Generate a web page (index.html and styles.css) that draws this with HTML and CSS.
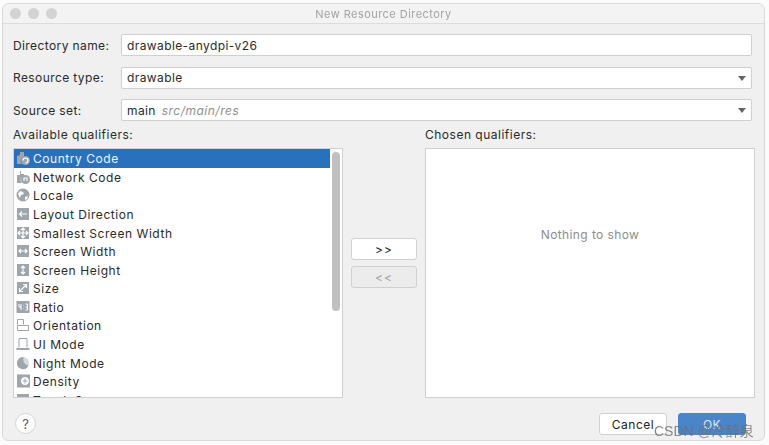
FILE: index.html
```html
<!DOCTYPE html>
<html lang="en">
<head>
<meta charset="utf-8">
<title>New Resource Directory</title>
<link rel="stylesheet" href="styles.css">
</head>
<body>
<div class="window">
  <header class="titlebar">
    <div class="lights"><i></i><i></i><i></i></div>
    <div class="title">New Resource Directory</div>
  </header>
  <main class="content">
    <div class="form">
      <label class="lbl">Directory name:</label>
      <div class="field">drawable-anydpi-v26</div>
      <label class="lbl">Resource type:</label>
      <div class="field combo">drawable<b class="arrow"></b></div>
      <label class="lbl">Source set:</label>
      <div class="field combo">main&nbsp;<em>src/main/res</em><b class="arrow"></b></div>
    </div>
    <div class="columns">
      <section class="col">
        <div class="coltitle">Available qualifiers:</div>
        <div class="panel list">
          <ul class="rows">
            <li class="sel"><svg viewBox="0 0 14 14"><path class="g" d="M1 5l3-1V1h4v5a4 4 0 0 0-2 7H1z"/><circle class="g" cx="9.500" cy="9.500" r="4.500"/><path class="w" d="M7 9.500a2.500 2.500 0 1 1 2.500 2.500"/></svg>Country Code</li>
            <li><svg viewBox="0 0 14 14"><path class="g" d="M1 5h3V1h1v3h3v2a4 4 0 0 0-2 7H1z"/><circle class="g" cx="9.500" cy="9.500" r="4.500"/><path class="w" d="M7.500 8h4M8 8v3M11 8v3"/></svg>Network Code</li>
            <li><svg viewBox="0 0 14 14"><circle class="g" cx="7" cy="7" r="6.500"/><path class="w2" d="M4 3l3 1 1 2-3 1-1 3-2-4zM9 9l3-1-1 3-2 1z"/></svg>Locale</li>
            <li><svg viewBox="0 0 14 14"><rect class="g" x="1" y="1" width="12" height="12"/><path class="w" d="M11 7H4M6 4.500L3.500 7 6 9.500"/></svg>Layout Direction</li>
            <li><svg viewBox="0 0 14 14"><rect class="g" x="1" y="1" width="12" height="12"/><path class="w" d="M2.500 7h9M7 2.500v9M5 4l2-2 2 2M5 10l2 2 2-2M4 5L2 7l2 2M10 5l2 2-2 2"/></svg>Smallest Screen Width</li>
            <li><svg viewBox="0 0 14 14"><rect class="g" x="1" y="1" width="12" height="12"/><path class="w" d="M3 7h8M5 5L3 7l2 2M9 5l2 2-2 2"/></svg>Screen Width</li>
            <li><svg viewBox="0 0 14 14"><rect class="g" x="1" y="1" width="12" height="12"/><path class="w" d="M7 3v8M5 5l2-2 2 2M5 9l2 2 2-2"/></svg>Screen Height</li>
            <li><svg viewBox="0 0 14 14"><rect class="g" x="1" y="1" width="12" height="12"/><path class="w" d="M3.500 10.500l7-7M7 3.500h3.500V7M3.500 7v3.500H7"/></svg>Size</li>
            <li><svg viewBox="0 0 14 14"><rect class="g" x="0.500" y="1" width="13" height="12"/><path class="w3" d="M3 4v3h2M5 4v6M7.500 5v.5M7.500 8v.5M9.500 4h2v6h-2M9.500 7h2"/></svg>Ratio</li>
            <li><svg viewBox="0 0 14 14"><path class="o" d="M1.500 6.500v-5h6v5M1.500 7.500h11v5h-11z"/></svg>Orientation</li>
            <li><svg viewBox="0 0 14 14"><path class="o" d="M3 10.500V1.500h8v9"/><rect class="g" x="0.500" y="11" width="13" height="2"/></svg>UI Mode</li>
            <li><svg viewBox="0 0 14 14"><circle class="lg" cx="7" cy="7" r="6"/><path class="g" d="M1 7a6 6 0 0 0 11.500 2.500A6 6 0 0 1 7.500 2 6 6 0 0 1 7 1 6 6 0 0 0 1 7z"/></svg>Night Mode</li>
            <li><svg viewBox="0 0 14 14"><rect class="g" x="1" y="0.500" width="13" height="13"/><circle class="w4" cx="9" cy="7" r="4.500"/><path class="o" d="M9 4.500v5M6.500 7h5"/></svg>Density</li>
            <li><svg viewBox="0 0 14 14"><rect class="g" x="1" y="1" width="12" height="12"/></svg>Touch Screen</li>
          </ul>
          <div class="scrollbar"><span class="thumb"></span></div>
        </div>
      </section>
      <div class="movers">
        <button class="btn mover">&gt;&gt;</button>
        <button class="btn mover off">&lt;&lt;</button>
      </div>
      <section class="col">
        <div class="coltitle">Chosen qualifiers:</div>
        <div class="panel empty">Nothing to show</div>
      </section>
    </div>
    <footer class="footer">
      <span class="help">?</span>
      <div class="actions">
        <button class="btn action">Cancel</button>
        <button class="btn action primary">OK</button>
      </div>
    </footer>
  </main>
</div>
<div class="watermark">CSDN @冷醉泉</div>
</body>
</html>
```
FILE: styles.css
```css
* { box-sizing: border-box; }
html, body { margin: 0; height: 100%; background: #fbfbfb; overflow: hidden; }
body { padding: 3px 4px 4px 2px; position: relative; font-family: Inter, "Liberation Sans", sans-serif; color: #2a2a2a; }

.window { height: 438px; background: #f0f0f0; border: 1px solid #d9d9d9; border-radius: 7px 7px 6px 6px; filter: blur(0.35px); display: flex; flex-direction: column; }

.titlebar { height: 20px; flex: none; display: flex; align-items: center; position: relative; background: #f3f3f3; border-bottom: 1px solid #dcdcdc; border-radius: 7px 7px 0 0; }
.lights { display: flex; gap: 7px; margin-left: 7px; }
.lights i { width: 11px; height: 11px; border-radius: 50%; background: #d3d3d3; }
.title { position: absolute; left: 0; right: 0; text-align: center; font-size: 11px; color: #a3a3a3; letter-spacing: 0.450px; }

.content { flex: 1; padding: 10px 9px 0 10px; display: flex; flex-direction: column; min-height: 0; }

.form { display: grid; grid-template-columns: 108px 631px; row-gap: 10.500px; font-size: 12px; }
.lbl { align-self: center; letter-spacing: 0.400px; }
.field { height: 22px; display: flex; align-items: center; background: #fff; border: 1px solid #cfcfcf; border-radius: 2px; padding-left: 5px; letter-spacing: 0.400px; position: relative; }
.field em { color: #8f8f8f; letter-spacing: 0.500px; margin-left: 2px; }
.arrow { position: absolute; right: 5px; top: 8px; width: 0; height: 0; border: 4.500px solid transparent; border-top: 5px solid #666; border-bottom: 0; }

.columns { display: grid; grid-template-columns: 330px 82px 330px; margin-top: 6px; font-size: 12px; }
.coltitle { height: 21px; letter-spacing: 0.500px; }
.panel { height: 250px; background: #fff; border: 1px solid #d0d0d0; }
.list { display: flex; overflow: hidden; }
.rows { list-style: none; margin: 0; padding: 0; flex: 1; min-width: 0; }
.rows li { height: 18.580px; display: flex; align-items: center; gap: 3px; padding: 1px 0 0 2px; letter-spacing: 0.550px; white-space: nowrap; }
.rows li.sel { background: #2a71bd; color: #eef4fb; }
.rows svg { width: 14px; height: 14px; flex: none; margin-top: -1px; }
.g { fill: #9ea5ab; }
.lg { fill: #d6d9db; }
.w { fill: none; stroke: #fff; stroke-width: 1.200; }
.w2 { fill: #fff; }
.w3 { fill: none; stroke: #fff; stroke-width: 1; }
.w4 { fill: #fff; stroke: #9ea5ab; }
.o { fill: none; stroke: #9ea5ab; stroke-width: 1; }
.scrollbar { width: 12px; flex: none; padding: 3px 2px; }
.thumb { display: block; width: 8px; height: 159px; border-radius: 4px; background: #c0c0c0; }

.movers { display: flex; flex-direction: column; gap: 6px; padding: 111px 8px 0; }
.btn { font-family: inherit; font-size: 12px; color: #222; background: #fff; border: 1px solid #d0d0d0; border-radius: 3px; padding: 0; }
.mover { height: 22px; width: 66px; letter-spacing: 1px; }
.mover.off { background: #ececec; color: #a0a0a0; }

.empty { display: flex; align-items: center; justify-content: center; padding-bottom: 78px; color: #8d8d8d; letter-spacing: 0.400px; }

.footer { display: flex; align-items: flex-start; justify-content: space-between; margin-top: 15px; }
.help { width: 21px; height: 21px; margin: 0 0 0 2px; border-radius: 50%; background: #fff; border: 1px solid #d4d4d4; display: flex; align-items: center; justify-content: center; font-size: 13px; color: #555; }
.actions { display: flex; gap: 11px; margin-right: 9px; }
.action { width: 68px; height: 22px; letter-spacing: 0.500px; }
.primary { background: #4a85c9; border-color: #4a85c9; color: #dfe9f4; }

.watermark { position: absolute; left: 654px; top: 420px; font: 14px "Liberation Sans", "Noto Sans CJK SC", sans-serif; color: rgba(110, 110, 110, 0.8); white-space: nowrap; }
```
